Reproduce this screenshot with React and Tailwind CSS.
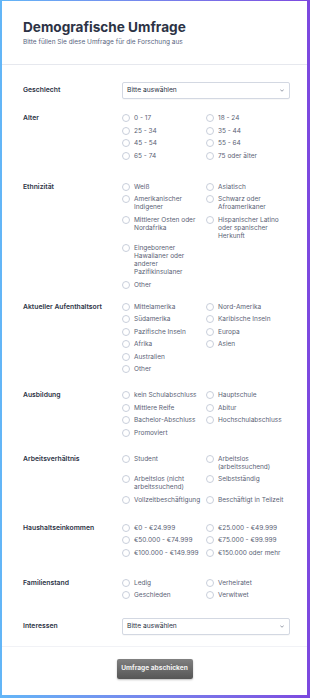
import React from 'react';

const FONT = { fontFamily: 'Inter, "Noto Sans", sans-serif' };

// each option row holds one or two radios
const FIELDS = [
  { label: 'Geschlecht', type: 'select', mt: 'mt-[17px]' },
  {
    label: 'Alter',
    mt: 'mt-[15px]',
    rows: [['0 - 17', '18 - 24'], ['25 - 34', '35 - 44'], ['45 - 54', '55 - 64'], ['65 - 74', '75 oder älter']],
  },
  {
    label: 'Ethnizität',
    mt: 'mt-[23px]',
    rows: [
      ['Weiß', 'Asiatisch'],
      ['Amerikanischer Indigener', 'Schwarz oder Afroamerikaner'],
      ['Mittlerer Osten oder Nordafrika', 'Hispanischer Latino oder spanischer Herkunft'],
      ['Eingeborener Hawaiianer oder anderer Pazifikinsulaner'],
      ['Other'],
    ],
  },
  {
    label: 'Aktueller Aufenthaltsort',
    mt: 'mt-[14px]',
    rows: [
      ['Mittelamerika', 'Nord-Amerika'],
      ['Südamerika', 'Karibische Inseln'],
      ['Pazifische Inseln', 'Europa'],
      ['Afrika', 'Asien'],
      ['Australien'],
      ['Other'],
    ],
  },
  {
    label: 'Ausbildung',
    mt: 'mt-[18px]',
    rows: [['kein Schulabschluss', 'Hauptschule'], ['Mittlere Reife', 'Abitur'], ['Bachelor-Abschluss', 'Hochschulabschluss'], ['Promoviert']],
  },
  {
    label: 'Arbeitsverhältnis',
    mt: 'mt-[18px]',
    rows: [
      ['Student', 'Arbeitslos (arbeitssuchend)'],
      ['Arbeitslos (nicht arbeitssuchend)', 'Selbstständig'],
      ['Vollzeitbeschäftigung', 'Beschäftigt in Teilzeit'],
    ],
  },
  {
    label: 'Haushaltseinkommen',
    mt: 'mt-[20px]',
    rows: [
      ['€0 - €24.999', '€25.000 - €49.999'],
      ['€50.000 - €74.999', '€75.000 - €99.999'],
      ['€100.000 - €149.999', '€150.000 oder mehr'],
    ],
  },
  { label: 'Familienstand', mt: 'mt-[22px]', rows: [['Ledig', 'Verheiratet'], ['Geschieden', 'Verwitwet']] },
  { label: 'Interessen', type: 'select', mt: 'mt-[19px]' },
];

function Select() {
  return (
    <div className="flex h-[17px] items-center justify-between rounded-[2px] border border-[#d3d8e2] bg-white pl-[4px] pr-[5px] shadow-[0_1px_1px_rgba(0,0,0,0.03)]">
      <span className="text-[6.7px] leading-none text-[#2c3345]">Bitte auswählen</span>
      <svg width="4" height="3" viewBox="0 0 8 5" fill="none">
        <path d="M1 1l3 3 3-3" stroke="#6b7385" strokeWidth="1.4" strokeLinecap="round" strokeLinejoin="round" />
      </svg>
    </div>
  );
}

function Radio({ text }) {
  return (
    <label className="flex items-start gap-[4px] pr-[3px]">
      <span className="h-[8px] w-[8px] shrink-0 rounded-full border border-[#c9cfdb] bg-white" />
      <span className="text-[6.5px] leading-[8px] text-[#5a6275]">{text}</span>
    </label>
  );
}

function Field({ field }) {
  const isSelect = field.type === 'select';
  return (
    <div className={`grid grid-cols-[99px_1fr] ${field.mt}`}>
      <div className={`text-[6.8px] font-semibold text-[#2c3345] ${isSelect ? 'flex h-[17px] items-center' : 'leading-[8px]'}`}>
        {field.label}
      </div>
      {isSelect ? (
        <Select />
      ) : (
        <div className="flex flex-col gap-y-[4.5px]">
          {field.rows.map((row) => (
            <div key={row[0]} className="grid grid-cols-2">
              {row.map((o) => (
                <Radio key={o} text={o} />
              ))}
            </div>
          ))}
        </div>
      )}
    </div>
  );
}

export default function App() {
  return (
    <div className="flex h-screen flex-col bg-gradient-to-r from-[#62b6f7] to-[#7c48df] pb-[3px] pl-[2px] pr-[3px] pt-px" style={FONT}>
      <div className="flex flex-1 flex-col bg-white">
        <div className="border-b border-[#e6e8ee] pb-[18px] pl-[21px] pr-[17px] pt-[18px]">
          <h1 className="text-[13.6px] font-bold leading-[16px] text-[#2c3345]">Demografische Umfrage</h1>
          <p className="mt-[3px] text-[6.5px] leading-[8px] text-[#57647e]">Bitte füllen Sie diese Umfrage für die Forschung aus</p>
        </div>

        <div className="flex-1 pl-[21px] pr-[17px]">
          {FIELDS.map((f) => (
            <Field key={f.label} field={f} />
          ))}
        </div>

        <div className="flex justify-center border-t border-[#f1f2f6] pb-[16px] pt-[12px]">
          <button
            type="button"
            className="h-[20px] w-[76px] rounded-[2px] bg-gradient-to-b from-[#808080] to-[#565656] text-[6.6px] font-bold text-[#f3f3f3] shadow-[0_1px_2px_rgba(0,0,0,0.25)]"
          >
            Umfrage abschicken
          </button>
        </div>
      </div>
    </div>
  );
}
